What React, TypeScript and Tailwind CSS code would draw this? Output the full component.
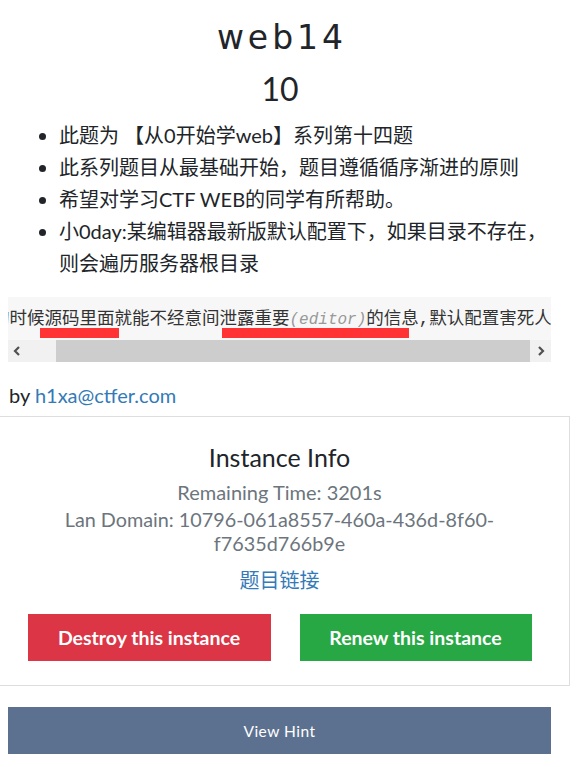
import React from "react";

// Challenge description bullets
const bullets = [
  "此题为 【从0开始学web】系列第十四题",
  "此系列题目从最基础开始，题目遵循循序渐进的原则",
  "希望对学习CTF WEB的同学有所帮助。",
  "小0day:某编辑器最新版默认配置下，如果目录不存在，则会遍历服务器根目录",
];

const sans = "font-['Lato','Noto_Sans_CJK_SC',sans-serif]";

export default function App() {
  return (
    <div className={`w-[580px] h-[767px] overflow-hidden bg-white text-[#212529] ${sans}`}>
      {/* Title */}
      <div className="w-[560px] text-center">
        <h1 className="pt-[14px] pl-[4px] font-['DejaVu_Sans',sans-serif] text-[33px] leading-[48px] tracking-[4px] text-[#212529]">
          web14
        </h1>
        <h2 className="mt-[7px] text-[32px] leading-[40px]">10</h2>
      </div>

      {/* Description */}
      <div className="mx-[8px] w-[543px]">
        <ul className="mt-[10px] list-disc pl-[51px] text-[20px] leading-[32px]">
          {bullets.map((b) => (
            <li key={b}>{b}</li>
          ))}
        </ul>

        {/* Scrolled code block */}
        <div className="mt-[18px] bg-[#f7f7f7]">
          <div className="relative h-[43px] overflow-hidden">
            <div className="flex h-[43px] items-center whitespace-nowrap -ml-[16px] pt-[2px] font-['Liberation_Mono','Noto_Sans_CJK_SC',monospace] text-[16px] text-[#333]">
              <span className="text-[17.5px]">的时候源码里面就能不经意间泄露重要</span>
              <span className="italic text-[#999]">(editor)</span>
              <span className="text-[17.5px]">的信息,默认配置害死人</span>
            </div>
            <div className="absolute left-[32px] top-[31px] h-[10px] w-[79px] bg-[#ff3333]" />
            <div className="absolute left-[214px] top-[31px] h-[10px] w-[187px] bg-[#ff3333]" />
          </div>
          <div className="flex h-[22px] items-stretch bg-[#f1f1f1]">
            <div className="flex w-[18px] items-center justify-center">
              <svg width="8" height="10" viewBox="0 0 8 10"><path d="M6 1 L2 5 L6 9" fill="none" stroke="#505050" strokeWidth="2.2" /></svg>
            </div>
            <div className="ml-[30px] w-[474px] bg-[#cdcdcd]" />
            <div className="flex flex-1 items-center justify-center">
              <svg width="8" height="10" viewBox="0 0 8 10"><path d="M2 1 L6 5 L2 9" fill="none" stroke="#505050" strokeWidth="2.2" /></svg>
            </div>
          </div>
        </div>
      </div>

      {/* Author */}
      <p className="mt-[21px] px-[9px] text-[20px] leading-[24px]">
        by <a className="text-[#337ab7]">h1xa@ctfer.com</a>
      </p>

      {/* Instance card */}
      <div className="mt-[9px] -ml-[11px] w-[581px] border border-[#dedede] px-[20px] pt-[24px] pb-[24px] text-center">
        <h4 className="text-[25px] leading-[32px] text-[#212529]">Instance Info</h4>
        <p className="mt-[7px] text-[20px] leading-[24px] text-[#6c757d]">Remaining Time: 3201s</p>
        <div className="mx-auto mt-[3px] w-[460px] text-[19.8px] leading-[24px] text-[#6c757d]">
          Lan Domain: 10796-061a8557-460a-436d-8f60-f7635d766b9e
        </div>
        <p className="mt-[13px] text-[20px] leading-[24px] text-[#337ab7]">题目链接</p>
        <div className="mt-[22px] flex justify-center gap-[29px]">
          <button className="h-[47px] w-[243px] shrink-0 bg-[#dc3545] text-[19.5px] font-bold text-white">
            Destroy this instance
          </button>
          <button className="h-[47px] w-[232px] shrink-0 bg-[#28a745] text-[19.5px] font-bold text-white">
            Renew this instance
          </button>
        </div>
      </div>

      {/* Hint */}
      <button className="mx-[8px] mt-[21px] block h-[47px] w-[543px] bg-[#5c718f] pt-[3px] text-[15.5px] tracking-[0.5px] text-white">
        View Hint
      </button>
    </div>
  );
}
